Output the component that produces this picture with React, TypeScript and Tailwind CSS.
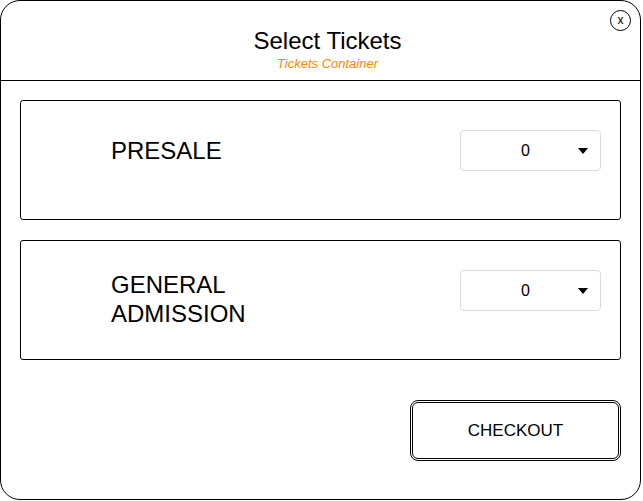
import React from "react";

function Row({ label }: { label: string }) {
  return (
    <div className="h-[120px] rounded-[3px] border border-black bg-white pl-[90px] pr-[19px] pt-[29px]">
      <div className="flex items-start justify-between">
        <div className="flex min-h-[41px] w-[150px] items-center text-[24px] leading-[29px] text-black">
          {label}
        </div>
        <div className="relative flex h-[41px] w-[141px] items-center rounded-[4px] border border-[#dcdcdc] bg-white">
          <span className="w-full pr-[10px] text-center text-[16px] text-black">0</span>
          <svg
            className="absolute right-[12px] top-[17px]"
            width="10"
            height="6"
            viewBox="0 0 10 6"
          >
            <path d="M0 0 L10 0 L5 6 Z" fill="#000" />
          </svg>
        </div>
      </div>
    </div>
  );
}

export default function App() {
  return (
    <div
      className="h-[501px] w-[643px] bg-white"
      style={{ fontFamily: '"Liberation Sans", Arial, sans-serif' }}
    >
      <div className="relative flex h-[500px] w-[641px] flex-col overflow-hidden rounded-[20px] border border-black bg-white">
        <div className="flex h-[80px] shrink-0 flex-col items-center border-b border-black pl-[14px] pt-[26px]">
          <div className="text-[24px] leading-[28px] text-black">Select Tickets</div>
          <div className="mt-[1px] text-[13px] italic leading-[15px] text-[#ff8500]">
            Tickets Container
          </div>
        </div>
        <button className="absolute right-[9px] top-[9px] flex h-[21px] w-[21px] items-center justify-center rounded-full border border-black bg-white pb-[2px] text-[12px] leading-none text-black">
          x
        </button>
        <div className="flex flex-col px-[19px] pt-[19px]">
          <Row label="PRESALE" />
          <div className="mt-[20px]">
            <Row label="GENERAL ADMISSION" />
          </div>
          <div className="mt-[40px] flex justify-end">
            <button className="flex h-[61px] w-[211px] items-center justify-center rounded-[8px] border-[3px] border-double border-black bg-white text-[17px] text-black">
              CHECKOUT
            </button>
          </div>
        </div>
      </div>
    </div>
  );
}
